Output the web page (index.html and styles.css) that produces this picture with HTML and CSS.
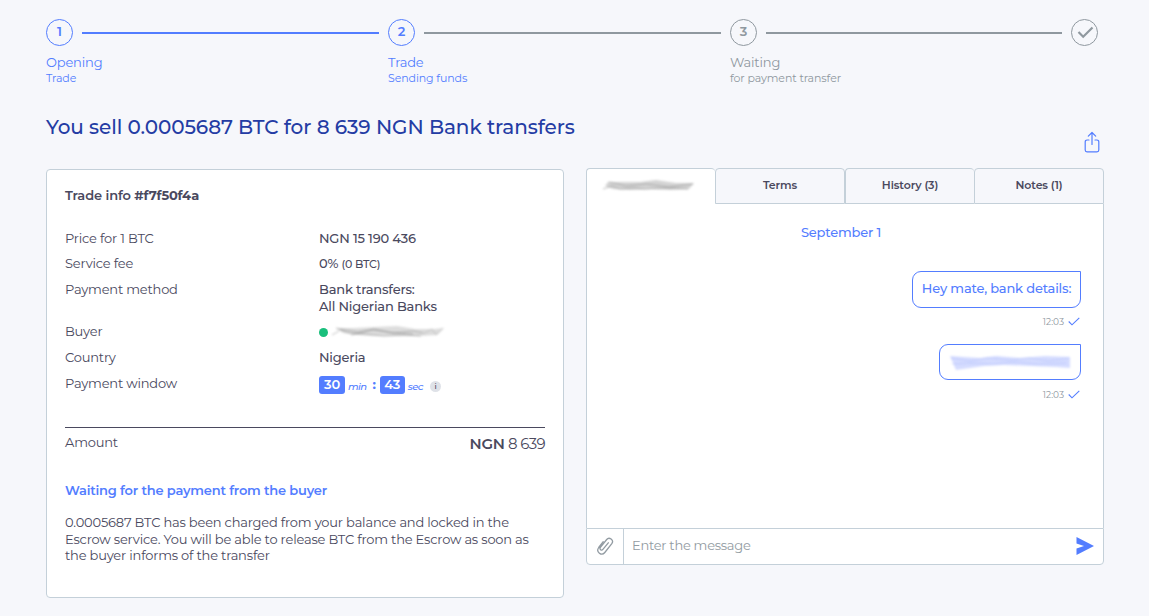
FILE: index.html
```html
<!DOCTYPE html>
<html lang="en">
<head>
  <meta charset="UTF-8" />
  <meta name="viewport" content="width=device-width, initial-scale=1.0" />
  <title>Trade #f7f50f4a</title>
  <link rel="stylesheet" href="styles.css">
</head>
<body>
  <div class="steps">
    <div class="step active">
      <div class="step-line"><span class="circle">1</span></div>
      <div class="step-title">Opening</div>
      <div class="step-text">Trade</div>
    </div>
    <div class="step active current">
      <div class="step-line"><span class="circle">2</span></div>
      <div class="step-title">Trade</div>
      <div class="step-text">Sending funds</div>
    </div>
    <div class="step last">
      <div class="step-line"><span class="circle">3</span></div>
      <div class="step-title">Waiting</div>
      <div class="step-text">for payment transfer</div>
    </div>
    <span class="circle">
      <svg width="17" height="13" viewBox="0 0 17 13" fill="none" stroke="currentColor" stroke-width="2.2"><path d="M1.500 6l4.700 4.800L15.500 1.500"/></svg>
    </span>
  </div>

  <div class="heading">
    <h1>You sell 0.0005687 BTC for 8 639 NGN Bank transfers</h1>
    <svg class="share" width="16" height="22" viewBox="0 0 16 22" fill="none" stroke="currentColor" stroke-width="1.2" stroke-linecap="round" stroke-linejoin="round"><path d="M5 9H3a1.800 1.800 0 0 0-1.800 1.800v8.200a1.800 1.800 0 0 0 1.800 1.800h10a1.800 1.800 0 0 0 1.800-1.800v-8.200A1.800 1.800 0 0 0 13 9h-2M8 13.500V1.500M4.300 5.200L8 1.500l3.700 3.700"/></svg>
  </div>

  <div class="content">
    <div class="card">
      <h2>Trade info <b>#f7f50f4a</b></h2>
      <div class="rows">
        <div class="row"><span>Price for 1 BTC</span><span class="value">NGN 15 190 436</span></div>
        <div class="row"><span>Service fee</span><span class="value">0% <small>(0 BTC)</small></span></div>
        <div class="row"><span>Payment method</span><span class="value">Bank transfers:<br>All Nigerian Banks</span></div>
        <div class="row">
          <span>Buyer</span>
          <span class="value buyer">
            <i class="online"></i>
            <svg class="smudge" width="116" height="14" viewBox="0 0 116 14" fill="none">
              <path d="M5 3l19 0 20-1 22-1 18 3 20 0 9-1-7 7-18 1-20 0-22 0-20-1-14-2z" fill="#aaa" opacity=".4"/>
              <path d="M1 10l7-4M5 3l13 5 15 1 20 2 20-1 17 1M9 4l18 3 16-3 19 4 20-2 10 2M20 10l22-5 22 3 18 1" stroke="#666" opacity=".4"/>
              <path d="M92 9l9-5 4 6 7-7" stroke="#aaa" opacity=".5"/>
            </svg>
          </span>
        </div>
        <div class="row country"><span>Country</span><span class="value">Nigeria</span></div>
        <div class="row window">
          <span>Payment window</span>
          <span class="value timer"><b class="digits">30</b><em>min</em><span class="colon">:</span><b class="digits seconds">43</b><em>sec</em><span class="info">i</span></span>
        </div>
      </div>
      <div class="amount"><span>Amount</span><span class="sum"><b>NGN</b> 8 639</span></div>
      <h3>Waiting for the payment from the buyer</h3>
      <p>0.0005687 BTC has been charged from your balance and locked in the<br>Escrow service. You will be able to release BTC from the Escrow as soon as<br>the buyer informs of the transfer</p>
    </div>

    <div class="chat">
      <div class="tabs">
        <div class="tab selected">
          <svg class="smudge" width="96" height="14" viewBox="0 0 96 14" fill="none">
            <path d="M6 3l17 0 15 0 16-2 20 3 18 0-5 6-18 1-20-1-20 1-18-1-8-3z" fill="#aaa" opacity=".5"/>
            <path d="M1 10l9-3 8 3 14-1 11 1 19-1 10 0 14 1M7 3l17 4 20-2 23 3 24-3" stroke="#666" opacity=".4"/>
          </svg>
        </div>
        <div class="tab">Terms</div>
        <div class="tab">History (3)</div>
        <div class="tab">Notes (1)</div>
      </div>
      <div class="messages">
        <div class="date">September 1</div>
        <div class="message">Hey mate, bank details:</div>
        <div class="time">12:03 <svg width="12" height="9" viewBox="0 0 12 9" fill="none" stroke="#537dff" stroke-width="1.100"><path d="M.7 4.500l3.300 3.300L11.300.8"/></svg></div>
        <div class="message hidden-text">
          <svg class="smudge" width="124" height="16" viewBox="0 0 124 16" fill="none">
            <path d="M2 2l30 2 16-2 24 2 25-2 25 1v11l-14-1-26-1-26-1-20 1-14 2-14 2z" fill="#b9c5ff" opacity=".6"/>
            <path d="M3 4l18 3 19-3 22 2 20-2 19 3 20-3M4 10l21-1 20 1 21-2 24 2 29-1" stroke="#98a9f5" stroke-width="1.200" opacity=".35"/>
          </svg>
        </div>
        <div class="time second">12:03 <svg width="12" height="9" viewBox="0 0 12 9" fill="none" stroke="#537dff" stroke-width="1.100"><path d="M.7 4.500l3.300 3.300L11.300.8"/></svg></div>
      </div>
      <div class="composer">
        <span class="attach">
          <svg width="18" height="20" viewBox="0 0 18 20" fill="none" stroke="#929ba2" stroke-width="1.300" stroke-linecap="round"><path d="M12.300 6.800l-5.400 6.600c-1.400 1.700-3.900-.2-2.500-2l6.300-7.900c2.400-3 7.700.4 5.100 4.200l-7 8.800c-3.100 3.900-9.300-.4-6.100-5l4.500-5.800"/></svg>
        </span>
        <span class="placeholder">Enter the message</span>
        <svg class="send" width="18" height="18" viewBox="0 0 18 18" fill="#537dff"><path d="M.5 0L18 9 .5 18v-6.500L8 9 .5 6.500z"/></svg>
      </div>
    </div>
  </div>
</body>
</html>
```

FILE: styles.css
```css
* {
  box-sizing: border-box;
}
body {
  margin: 0;
  padding: 19px 45px 0 46px;
  height: 616px;
  overflow: hidden;
  background: #f6f7fb;
  color: #4a495e;
  font-family: Montserrat, Inter, sans-serif;
  font-size: 13px;
  line-height: 17px;
  letter-spacing: -0.19px;
}
.steps {
  display: flex;
  height: 68px;
  margin-right: 6px;
  color: #8f989f;
}
.step {
  width: 342px;
}
.step.last {
  flex: 1;
}
.step.active {
  color: #537dff;
}
.step-line {
  display: flex;
  align-items: center;
  gap: 9px;
  padding-right: 9px;
}
.step-line::after {
  content: "";
  flex: 1;
  height: 2px;
  background: #8f989f;
}
.step.active:not(.current) .step-line::after {
  background: #537dff;
}
.circle {
  display: flex;
  flex: none;
  align-items: center;
  justify-content: center;
  width: 27px;
  height: 27px;
  padding-bottom: 2px;
  border: 1px solid;
  border-radius: 50%;
  font-weight: 600;
}
.circle svg {
  margin: 2px 0 0 1px;
}
.step-title {
  margin-top: 8px;
  letter-spacing: -0.15px;
}
.step-text {
  font-size: 11px;
  line-height: 15px;
  letter-spacing: -0.1px;
}
.heading {
  display: flex;
  justify-content: space-between;
  height: 81px;
  padding: 27px 4px 0 0;
  color: #243ca4;
}
h1 {
  margin: 0;
  font-size: 20px;
  font-weight: 500;
  line-height: 26px;
  letter-spacing: -0.08px;
}
.share {
  margin-top: 17px;
  color: #537dff;
}
.content {
  display: flex;
  align-items: flex-start;
  gap: 22px;
}
.card {
  width: 518px;
  height: 429px;
  margin-top: 1px;
  padding: 17px 18px;
  border: 1px solid #c4d0d9;
  border-radius: 4px;
  background: #fff;
}
h2 {
  margin: 0;
  font-size: 13px;
  font-weight: 600;
  letter-spacing: -0.1px;
}
h2 b {
  font-weight: 700;
  letter-spacing: -0.22px;
}
.rows {
  display: grid;
  gap: 8px;
  margin-top: 26px;
}
.row {
  display: grid;
  grid-template-columns: 254px 1fr;
}
.row.country,
.row.window {
  margin-top: 1px;
}
.value {
  font-weight: 500;
}
.value small {
  font-size: 11px;
}
.buyer,
.timer {
  display: flex;
  align-items: center;
  height: 17px;
}
.online {
  width: 9px;
  height: 9px;
  margin: 1px 3px 0 0;
  border-radius: 50%;
  background: #1abf7c;
}
.smudge {
  filter: blur(1px);
}
.digits {
  width: 26px;
  height: 18px;
  margin-top: 3px;
  border-radius: 3px;
  background: #537dff;
  color: #fff;
  font-weight: 600;
  line-height: 17px;
  text-align: center;
}
.digits.seconds {
  width: 25px;
}
.timer em {
  margin: 5px 0 0 3px;
  color: #537dff;
  font-size: 10px;
  letter-spacing: -0.5px;
}
.colon {
  width: 13px;
  margin-top: 2px;
  padding-right: 4px;
  color: #537dff;
  font-weight: 700;
  text-align: right;
}
.info {
  width: 11px;
  height: 11px;
  margin: 5px 0 0 7px;
  border-radius: 50%;
  background: #dfe2e8;
  font-size: 8px;
  line-height: 11px;
  text-align: center;
}
.amount {
  display: flex;
  justify-content: space-between;
  margin-top: 35px;
  padding-top: 6px;
  border-top: 1px solid #4a495e;
}
.sum {
  padding-top: 1px;
  font-size: 15px;
  letter-spacing: -0.65px;
}
.sum b {
  font-weight: 600;
  letter-spacing: -0.2px;
}
h3 {
  margin: 30px 0 0;
  color: #537dff;
  font-size: 13px;
  font-weight: 600;
}
p {
  margin: 15px 0 0;
  line-height: 16.5px;
  white-space: nowrap;
}
.chat {
  display: flex;
  flex-direction: column;
  width: 518px;
  height: 397px;
}
.tabs {
  display: grid;
  grid-template-columns: 129px 130px 129px 130px;
  height: 36px;
}
.tab {
  display: flex;
  align-items: center;
  justify-content: center;
  padding-bottom: 2px;
  border: 1px solid #c4d0d9;
  border-radius: 4px 4px 0 0;
  font-size: 11px;
  font-weight: 600;
  letter-spacing: -0.1px;
}
.tab.selected {
  padding: 0 3px 1px 0;
  border-right: 0;
  border-bottom: 0;
  background: #fff;
}
.tab:nth-child(3) {
  border-right: 0;
}
.messages {
  display: flex;
  flex: 1;
  flex-direction: column;
  align-items: flex-end;
  padding: 20px 22px 0 14px;
  border: 1px solid #c4d0d9;
  border-width: 0 1px;
  background: #fff;
}
.date {
  align-self: center;
  margin-bottom: 30px;
  color: #537dff;
  font-weight: 500;
}
.message {
  width: 169px;
  height: 37px;
  border: 1px solid #537dff;
  border-radius: 9px 0 9px 9px;
  color: #537dff;
  font-weight: 500;
  line-height: 33px;
  text-align: center;
}
.message.hidden-text {
  width: 142px;
  height: 36px;
  padding-top: 9px;
  line-height: 0;
}
.time {
  display: flex;
  align-items: center;
  gap: 4px;
  height: 36px;
  padding: 0 1px 9px 0;
  color: #8f989f;
  font-size: 9px;
  letter-spacing: 0;
}
.time.second {
  padding-bottom: 7px;
}
.composer {
  display: flex;
  align-items: center;
  height: 37px;
  padding-right: 9px;
  border: 1px solid #c4d0d9;
  border-radius: 0 0 4px 4px;
  background: #fff;
}
.attach {
  display: flex;
  align-items: center;
  justify-content: center;
  width: 37px;
  height: 35px;
  padding-bottom: 1px;
  border-right: 1px solid #c4d0d9;
}
.placeholder {
  flex: 1;
  padding: 0 0 2px 8px;
  color: #929ba2;
  letter-spacing: -0.27px;
}
.send {
  margin-bottom: 1px;
}
```
